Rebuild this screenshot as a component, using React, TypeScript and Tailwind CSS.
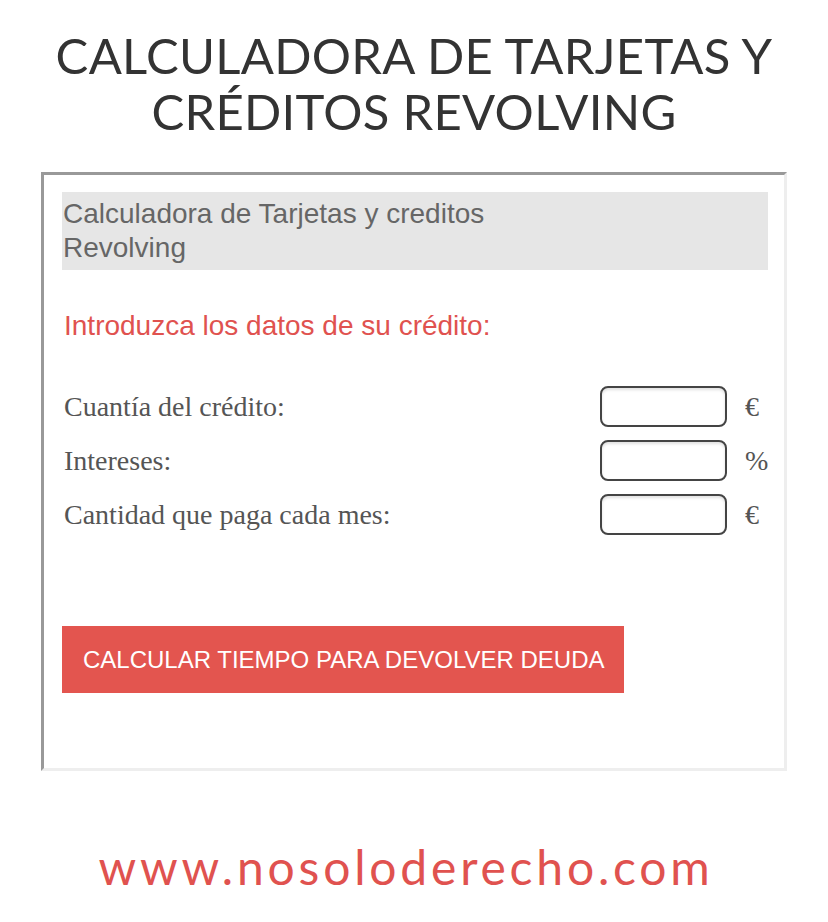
const rows = [
  { label: "Cuantía del crédito:", unit: "€" },
  { label: "Intereses:", unit: "%" },
  { label: "Cantidad que paga cada mes:", unit: "€" },
];

export default function App() {
  return (
    <div className="min-h-[922px] w-[828px] bg-white">
      <h1 className="pt-[27px] text-center font-['Lato',sans-serif] text-[49px] leading-[56px] tracking-[0.3px] text-[#333]">
        CALCULADORA DE TARJETAS Y
        <br />
        CRÉDITOS REVOLVING
      </h1>

      <div className="mx-auto mt-[33px] w-[746px] border-[3px] border-t-[#999] border-l-[#999] border-r-[#eee] border-b-[#eee] pl-[18px] pr-[16px] pt-[17px] pb-[75px]">
        <div className="bg-[#e6e6e6] py-[5px] pl-[1px] font-['Liberation_Sans',sans-serif] text-[28px] leading-[34px] text-[#666]">
          <div className="w-[480px]">Calculadora de Tarjetas y creditos Revolving</div>
        </div>

        <p className="mt-[40px] pl-[2px] font-['Liberation_Sans',sans-serif] text-[28px] leading-[32px] text-[#e0524f]">
          Introduzca los datos de su crédito:
        </p>

        <div className="mt-[44px] flex flex-col gap-[13px]">
          {rows.map((r) => (
            <div key={r.label} className="flex items-center">
              <span className="flex-1 pl-[2px] font-['Liberation_Serif',serif] text-[28px] leading-none text-[#555]">
                {r.label}
              </span>
              <input
                type="text"
                className="h-[41px] w-[127px] rounded-[8px] border-2 border-[#444] bg-white shadow-[inset_0_2px_3px_rgba(0,0,0,0.12)] outline-none"
              />
              <span className="w-[41px] pl-[18px] font-['Liberation_Serif',serif] text-[28px] leading-none text-[#555]">
                {r.unit}
              </span>
            </div>
          ))}
        </div>

        <button className="mt-[91px] h-[67px] w-[562px] whitespace-nowrap bg-[#e3554f] pl-[21px] text-left font-['Liberation_Sans',sans-serif] text-[24px] leading-none text-white">
          CALCULAR TIEMPO PARA DEVOLVER DEUDA
        </button>
      </div>

      <p className="mt-[68px] pr-[16px] text-center font-['Lato',sans-serif] text-[48px] leading-[56px] tracking-[3.8px] text-[#e0524f]">
        www.nosoloderecho.com
      </p>
    </div>
  );
}
